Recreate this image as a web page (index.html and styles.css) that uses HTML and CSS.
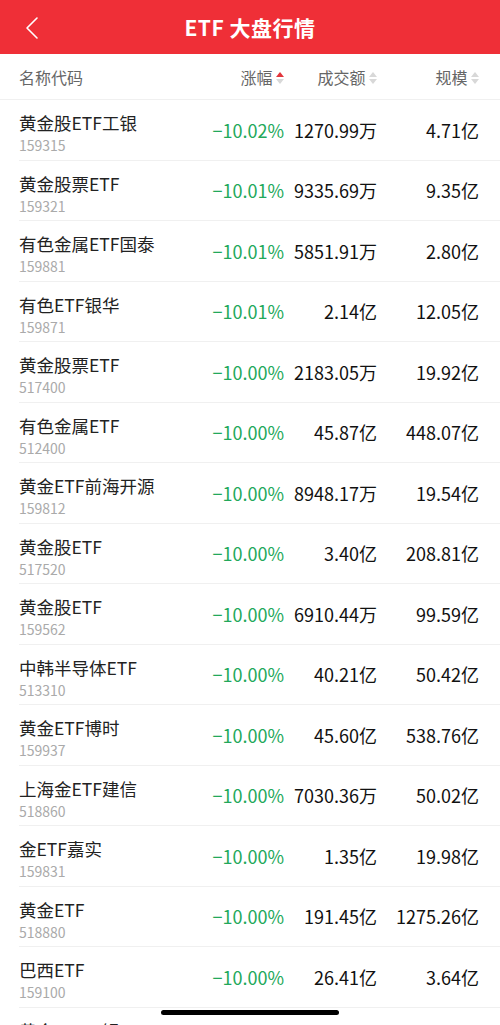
FILE: index.html
```html
<!DOCTYPE html>
<html lang="zh-CN">
<head>
    <meta charset="UTF-8">
    <meta name="viewport" content="width=device-width, initial-scale=1.0">
    <title>ETF大盘行情</title>
    <link rel="stylesheet" href="styles.css">
</head>
<body>

    <!-- Top bar -->
    <div class="navbar">
        <a class="back" href="#">
            <svg width="14" height="24" viewBox="0 0 14 24">
                <polyline points="12,2 2,12 12,22" fill="none" stroke="#fff" stroke-width="1.6" stroke-linecap="round" stroke-linejoin="round"/>
            </svg>
        </a>
        <div class="title">ETF 大盘行情</div>
    </div>

    <!-- Column header -->
    <div class="table-head">
        <div class="col-name">名称代码</div>
        <div class="col-num">涨幅 <span class="sort asc"><i class="up"></i><i class="down"></i></span></div>
        <div class="col-num">成交额 <span class="sort"><i class="up"></i><i class="down"></i></span></div>
        <div class="col-num">规模 <span class="sort"><i class="up"></i><i class="down"></i></span></div>
    </div>

    <div class="list">
        <div class="row">
            <div class="col-name"><div class="name">黄金股ETF工银</div><div class="code">159315</div></div>
            <div class="col-num pct">−10.02%</div>
            <div class="col-num">1270.99万</div>
            <div class="col-num">4.71亿</div>
        </div>
        <div class="row">
            <div class="col-name"><div class="name">黄金股票ETF</div><div class="code">159321</div></div>
            <div class="col-num pct">−10.01%</div>
            <div class="col-num">9335.69万</div>
            <div class="col-num">9.35亿</div>
        </div>
        <div class="row">
            <div class="col-name"><div class="name">有色金属ETF国泰</div><div class="code">159881</div></div>
            <div class="col-num pct">−10.01%</div>
            <div class="col-num">5851.91万</div>
            <div class="col-num">2.80亿</div>
        </div>
        <div class="row">
            <div class="col-name"><div class="name">有色ETF银华</div><div class="code">159871</div></div>
            <div class="col-num pct">−10.01%</div>
            <div class="col-num">2.14亿</div>
            <div class="col-num">12.05亿</div>
        </div>
        <div class="row">
            <div class="col-name"><div class="name">黄金股票ETF</div><div class="code">517400</div></div>
            <div class="col-num pct">−10.00%</div>
            <div class="col-num">2183.05万</div>
            <div class="col-num">19.92亿</div>
        </div>
        <div class="row">
            <div class="col-name"><div class="name">有色金属ETF</div><div class="code">512400</div></div>
            <div class="col-num pct">−10.00%</div>
            <div class="col-num">45.87亿</div>
            <div class="col-num">448.07亿</div>
        </div>
        <div class="row">
            <div class="col-name"><div class="name">黄金ETF前海开源</div><div class="code">159812</div></div>
            <div class="col-num pct">−10.00%</div>
            <div class="col-num">8948.17万</div>
            <div class="col-num">19.54亿</div>
        </div>
        <div class="row">
            <div class="col-name"><div class="name">黄金股ETF</div><div class="code">517520</div></div>
            <div class="col-num pct">−10.00%</div>
            <div class="col-num">3.40亿</div>
            <div class="col-num">208.81亿</div>
        </div>
        <div class="row">
            <div class="col-name"><div class="name">黄金股ETF</div><div class="code">159562</div></div>
            <div class="col-num pct">−10.00%</div>
            <div class="col-num">6910.44万</div>
            <div class="col-num">99.59亿</div>
        </div>
        <div class="row">
            <div class="col-name"><div class="name">中韩半导体ETF</div><div class="code">513310</div></div>
            <div class="col-num pct">−10.00%</div>
            <div class="col-num">40.21亿</div>
            <div class="col-num">50.42亿</div>
        </div>
        <div class="row">
            <div class="col-name"><div class="name">黄金ETF博时</div><div class="code">159937</div></div>
            <div class="col-num pct">−10.00%</div>
            <div class="col-num">45.60亿</div>
            <div class="col-num">538.76亿</div>
        </div>
        <div class="row">
            <div class="col-name"><div class="name">上海金ETF建信</div><div class="code">518860</div></div>
            <div class="col-num pct">−10.00%</div>
            <div class="col-num">7030.36万</div>
            <div class="col-num">50.02亿</div>
        </div>
        <div class="row">
            <div class="col-name"><div class="name">金ETF嘉实</div><div class="code">159831</div></div>
            <div class="col-num pct">−10.00%</div>
            <div class="col-num">1.35亿</div>
            <div class="col-num">19.98亿</div>
        </div>
        <div class="row">
            <div class="col-name"><div class="name">黄金ETF</div><div class="code">518880</div></div>
            <div class="col-num pct">−10.00%</div>
            <div class="col-num">191.45亿</div>
            <div class="col-num">1275.26亿</div>
        </div>
        <div class="row">
            <div class="col-name"><div class="name">巴西ETF</div><div class="code">159100</div></div>
            <div class="col-num pct">−10.00%</div>
            <div class="col-num">26.41亿</div>
            <div class="col-num">3.64亿</div>
        </div>
        <div class="row">
            <div class="col-name"><div class="name">黄金ETF工银</div><div class="code">518660</div></div>
            <div class="col-num pct">−10.00%</div>
            <div class="col-num">3.02亿</div>
            <div class="col-num">15.66亿</div>
        </div>
    </div>

    <!-- iOS home indicator -->
    <div class="home-bar"></div>

</body>
</html>
```

FILE: styles.css
```css
body {
    margin: 0;
    font-family: "Noto Sans CJK SC", "Noto Sans", sans-serif;
    background-color: #fff;
    color: #222;
    height: 1025px;
    overflow: hidden;
}
.navbar {
    height: 54px;
    background-color: #ef2f37;
    display: flex;
    align-items: center;
    justify-content: center;
    position: relative;
}
.back {
    position: absolute;
    left: 25px;
    top: 16px;
    display: block;
    height: 24px;
}
.title {
    color: #fff;
    font-size: 21px;
    font-weight: bold;
    letter-spacing: 0.5px;
}
.table-head,
.row {
    display: grid;
    grid-template-columns: 1fr 100px 93px 102px;
    align-items: center;
}
.table-head {
    height: 45px;
    padding: 0 21px 0 19px;
    border-bottom: 1px solid #f0f0f0;
    color: #666;
    font-size: 16px;
}
.col-num {
    text-align: right;
    white-space: nowrap;
}
.sort {
    display: inline-flex;
    flex-direction: column;
    gap: 2px;
    vertical-align: middle;
    position: relative;
    top: -1px;
}
.sort i {
    width: 0;
    height: 0;
    border-left: 4px solid transparent;
    border-right: 4px solid transparent;
}
.sort .up {
    border-bottom: 5px solid #d8d8d8;
}
.sort .down {
    border-top: 5px solid #d8d8d8;
}
.sort.asc .up {
    border-bottom-color: #e2353c;
}
.list {
    margin-left: 19px;
}
.row {
    height: 59.5px;
    padding-right: 21px;
    border-bottom: 1px solid #f0f0f0;
    font-size: 18px;
    color: #111;
}
.row .col-name {
    align-self: start;
    padding-top: 11px;
    color: #222;
}
.name {
    font-size: 17.5px;
    line-height: 24px;
}
.code {
    font-size: 14px;
    color: #aaa;
    line-height: 20px;
}
.pct {
    color: #22a85a;
}
.home-bar {
    position: fixed;
    left: 161px;
    bottom: 10px;
    width: 178px;
    height: 5px;
    border-radius: 3px;
    background-color: #000;
}
```
